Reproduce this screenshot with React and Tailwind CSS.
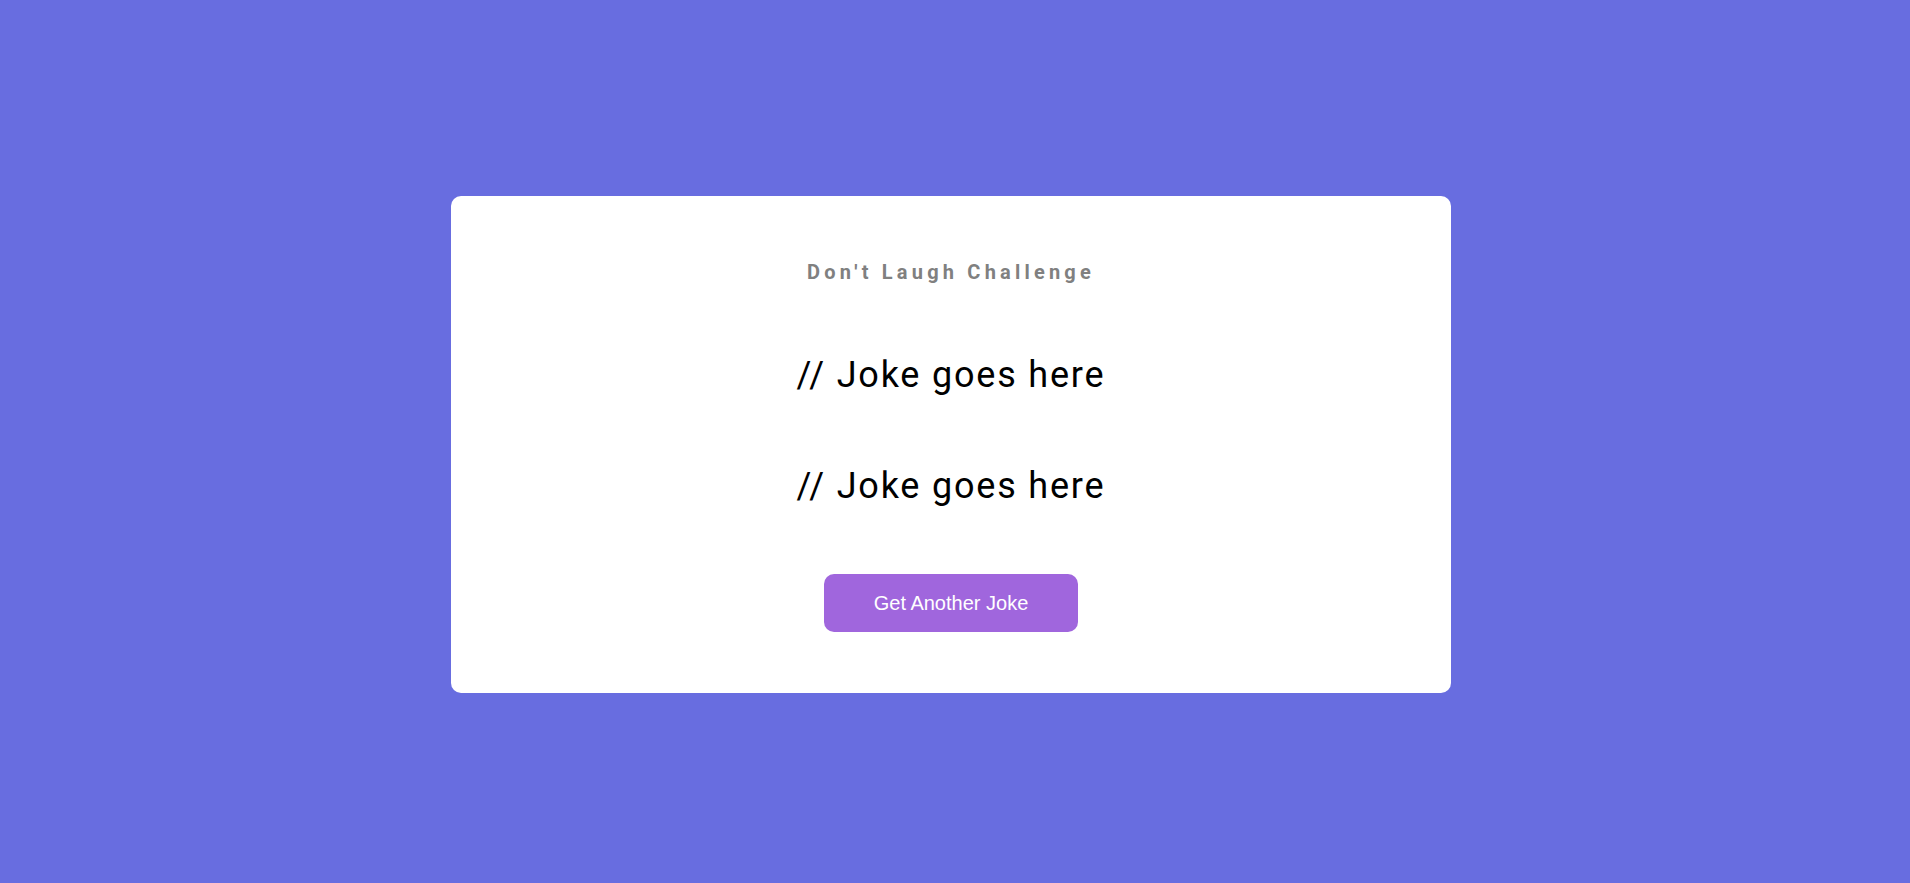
export default function App() {
  return (
    <div className="min-h-screen w-full bg-[#686de0] flex items-center justify-center pt-[6px] pr-[8px]" style={{ fontFamily: "Roboto, 'Liberation Sans', sans-serif" }}>
      <div className="w-[1000px] bg-white rounded-[10px] flex flex-col items-center pt-[64px] pb-[61px]">
        <h1 className="h-[24px] leading-[24px] text-[20px] font-bold tracking-[4.2px] text-[#808080] font-['Roboto',sans-serif]">
          Don't Laugh Challenge
        </h1>
        <p className="mt-[65px] h-[52px] leading-[52px] text-[36px] text-black tracking-[1.8px] font-['Roboto',sans-serif]">
          // Joke goes here
        </p>
        <p className="mt-[59px] h-[52px] leading-[52px] text-[36px] text-black tracking-[1.8px] font-['Roboto',sans-serif]">
          // Joke goes here
        </p>
        <button className="mt-[62px] w-[254px] h-[58px] rounded-[10px] bg-[#a066dd] text-white text-[20px] font-['Liberation_Sans',Arial,sans-serif]">
          Get Another Joke
        </button>
      </div>
    </div>
  );
}
